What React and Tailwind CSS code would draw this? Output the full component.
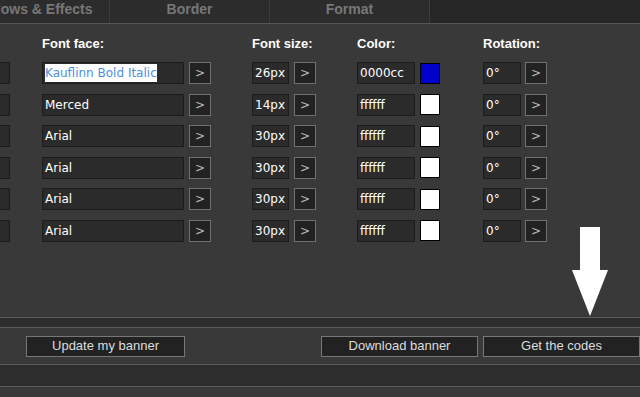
import React from 'react';

const rows = [
    { face: 'Kauflinn Bold Italic', size: '26px', color: '0000cc', swatch: 'bg-[#0000cc]', selected: true },
    { face: 'Merced', size: '14px', color: 'ffffff', swatch: 'bg-white' },
    { face: 'Arial', size: '30px', color: 'ffffff', swatch: 'bg-white' },
    { face: 'Arial', size: '30px', color: 'ffffff', swatch: 'bg-white' },
    { face: 'Arial', size: '30px', color: 'ffffff', swatch: 'bg-white' },
    { face: 'Arial', size: '30px', color: 'ffffff', swatch: 'bg-white' },
];

const inputCls = 'h-[22px] bg-[#2b2b2b] border border-[#1c1c1c] text-[12px] text-white pl-[2px] flex items-center whitespace-nowrap overflow-hidden';

const Arrow = () => (
    <button className="h-[22px] w-[22px] bg-[#222] border border-[#707070] text-[#bbb] text-[12px] flex items-center justify-center leading-none">
        &gt;
    </button>
);

const App = () => {
    return (
        <div className="w-[640px] h-[397px] overflow-hidden bg-[#393939] flex flex-col" style={{ fontFamily: '"DejaVu Sans", sans-serif' }}>
            {/* tabs */}
            <div className="h-[24px] flex bg-[#262626] border-b border-[#555] shrink-0" style={{ fontFamily: '"Liberation Sans", Arial, sans-serif' }}>
                {['Shadows & Effects', 'Border', 'Format'].map((t, i) => (
                    <div key={t} className={`w-[160px] shrink-0 bg-[#2c2c2c] border-r border-[#3c3c3c] flex items-start justify-center leading-[18px] text-[14px] font-bold text-[#777] ${i === 0 ? 'ml-[-50px]' : ''}`}>
                        {t}
                    </div>
                ))}
            </div>

            {/* main panel */}
            <div className="relative h-[294px] shrink-0 border-b border-[#5a5a5a] pt-[12px]">
                <div className="flex text-[13px] font-bold text-white h-[16px] leading-[16px]" style={{ fontFamily: '"Liberation Sans", Arial, sans-serif' }}>
                    <span className="ml-[42px] w-[210px]">Font face:</span>
                    <span className="w-[105px]">Font size:</span>
                    <span className="w-[126px]">Color:</span>
                    <span>Rotation:</span>
                </div>
                <div className="mt-[10px] flex flex-col gap-y-[9.5px]">
                    {rows.map((r, i) => (
                        <div key={i} className="flex items-center">
                            <div className={`${inputCls} w-[40px] ml-[-30px]`} />
                            <div className={`${inputCls} w-[142px] ml-[32px]`}>
                                {r.selected ? <span className="bg-white text-[#4a90e2]">{r.face}</span> : r.face}
                            </div>
                            <div className="ml-[5px]"><Arrow /></div>
                            <div className={`${inputCls} w-[37px] ml-[41px]`}>{r.size}</div>
                            <div className="ml-[5px]"><Arrow /></div>
                            <div className={`${inputCls} w-[58px] ml-[41px]`}>{r.color}</div>
                            <div className={`h-[21px] w-[20px] ml-[5px] border border-black ${r.swatch}`} />
                            <div className={`${inputCls} w-[38px] ml-[43px]`}>0°</div>
                            <div className="ml-[4px]"><Arrow /></div>
                        </div>
                    ))}
                </div>
                <svg className="absolute left-[571px] top-[203px]" width="38" height="91" viewBox="0 0 38 91">
                    <path d="M9 0 H29 V43 H37 L19 89 L1 43 H9 Z" fill="#fff" />
                </svg>
            </div>

            <div className="h-[10px] shrink-0 bg-[#2d2d2d] border-b border-[#5a5a5a]" />

            {/* actions */}
            <div className="h-[37px] shrink-0 border-b border-[#5a5a5a] flex items-center text-[13px] text-[#ddd]" style={{ fontFamily: '"Liberation Sans", Arial, sans-serif' }}>
                <button className="ml-[26px] w-[159px] h-[21px] bg-[#222] border border-[#777] flex items-center justify-center">Update my banner</button>
                <button className="ml-[136px] w-[157px] h-[21px] bg-[#222] border border-[#777] flex items-center justify-center">Download banner</button>
                <button className="ml-[5px] w-[157px] h-[21px] bg-[#222] border border-[#777] flex items-center justify-center">Get the codes</button>
            </div>

            <div className="h-[22px] shrink-0 bg-[#2d2d2d] border-b border-[#5a5a5a]" />
            <div className="flex-1" />
        </div>
    );
};

export default App;
